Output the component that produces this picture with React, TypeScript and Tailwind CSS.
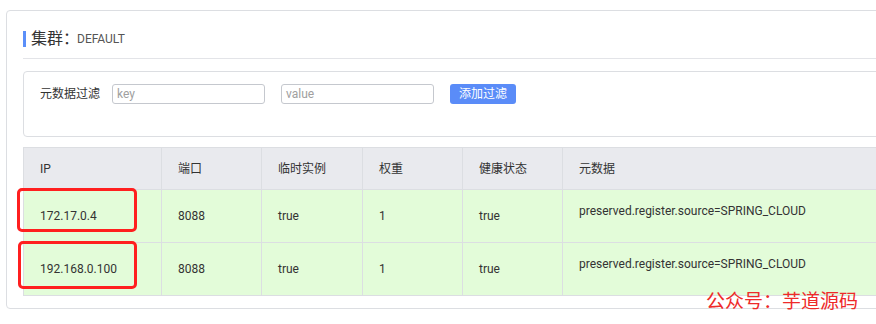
import React from "react";

const font = { fontFamily: 'Roboto, "Noto Sans CJK SC", sans-serif' };

const rows = [
  { ip: "172.17.0.4", port: "8088", eph: "true", weight: "1", healthy: "true", meta: "preserved.register.source=SPRING_CLOUD" },
  { ip: "192.168.0.100", port: "8088", eph: "true", weight: "1", healthy: "true", meta: "preserved.register.source=SPRING_CLOUD" },
];

export default function App() {
  return (
    <div
      className="relative w-[876px] h-[324px] overflow-hidden bg-white text-[#333] text-[12px]"
      style={font}
    >
      <div className="ml-[6px] mt-[10px] w-[920px] h-[299px] border border-[#dcdee2] rounded-[4px] pt-[20px] pl-[16px]">
        {/* title */}
        <div className="flex items-center h-[16px]">
          <div className="w-[3px] h-[16px] bg-[#5b8ff9]" />
          <span className="ml-[5px] text-[16px] leading-[16px] text-[#333]">集群：</span>
          <span className="ml-[-2px] text-[12px] leading-[16px] text-[#555]">DEFAULT</span>
        </div>
        <div className="mt-[11px] h-px bg-[#e3e4e8]" />

        {/* filter box */}
        <div className="mt-[12px] h-[66px] border border-[#dcdee2] rounded-[4px] pt-[12px] pl-[16px]">
          <div className="flex items-center h-[20px]">
            <span className="text-[12px] text-[#333] w-[72px]">元数据过滤</span>
            <div className="w-[153px] h-[20px] border border-[#c5c8ce] rounded-[3px] flex items-center pl-[4px] text-[12px] text-[#a0a0a0]">
              key
            </div>
            <div className="ml-[16px] w-[153px] h-[20px] border border-[#c5c8ce] rounded-[3px] flex items-center pl-[4px] text-[12px] text-[#a0a0a0]">
              value
            </div>
            <button className="ml-[16px] w-[66px] h-[20px] rounded-[3px] bg-[#5a8cf8] text-white text-[12px] leading-[20px]">
              添加过滤
            </button>
          </div>
        </div>

        {/* table */}
        <div className="relative mt-[10px]">
          <table className="border-collapse text-[12px] text-[#333]" style={{ tableLayout: "fixed", width: "900px" }}>
            <colgroup>
              <col style={{ width: 138 }} />
              <col style={{ width: 100 }} />
              <col style={{ width: 101 }} />
              <col style={{ width: 100 }} />
              <col style={{ width: 100 }} />
              <col />
            </colgroup>
            <thead>
              <tr className="bg-[#e9eaee] h-[42px]">
                {["IP", "端口", "临时实例", "权重", "健康状态", "元数据"].map((h) => (
                  <th key={h} className="border border-[#dcdee2] text-left font-normal pl-[16px] text-[#333]">
                    {h}
                  </th>
                ))}
              </tr>
            </thead>
            <tbody>
              {rows.map((r) => (
                <tr key={r.ip} className="bg-[#e3fcd9] h-[53px]">
                  <td className="border border-[#dcdee2] pl-[16px]">{r.ip}</td>
                  <td className="border border-[#dcdee2] pl-[16px]">{r.port}</td>
                  <td className="border border-[#dcdee2] pl-[16px]">{r.eph}</td>
                  <td className="border border-[#dcdee2] pl-[16px]">{r.weight}</td>
                  <td className="border border-[#dcdee2] pl-[16px]">{r.healthy}</td>
                  <td className="border border-[#dcdee2] pl-[16px] align-top pt-[12px]">{r.meta}</td>
                </tr>
              ))}
            </tbody>
          </table>
          {/* red highlight boxes */}
          <div className="absolute left-[-6px] top-[41px] w-[120px] h-[44px] border-[3px] border-[#ff1f1f] rounded-[5px]" />
          <div className="absolute left-[-5px] top-[94px] w-[119px] h-[48px] border-[3px] border-[#ff1f1f] rounded-[5px]" />
        </div>
      </div>

      {/* watermark */}
      <div className="absolute left-[706px] top-[291px] text-[19px] leading-[22px] text-[#ee2a2a] whitespace-nowrap">
        公众号：芋道源码
      </div>
    </div>
  );
}
